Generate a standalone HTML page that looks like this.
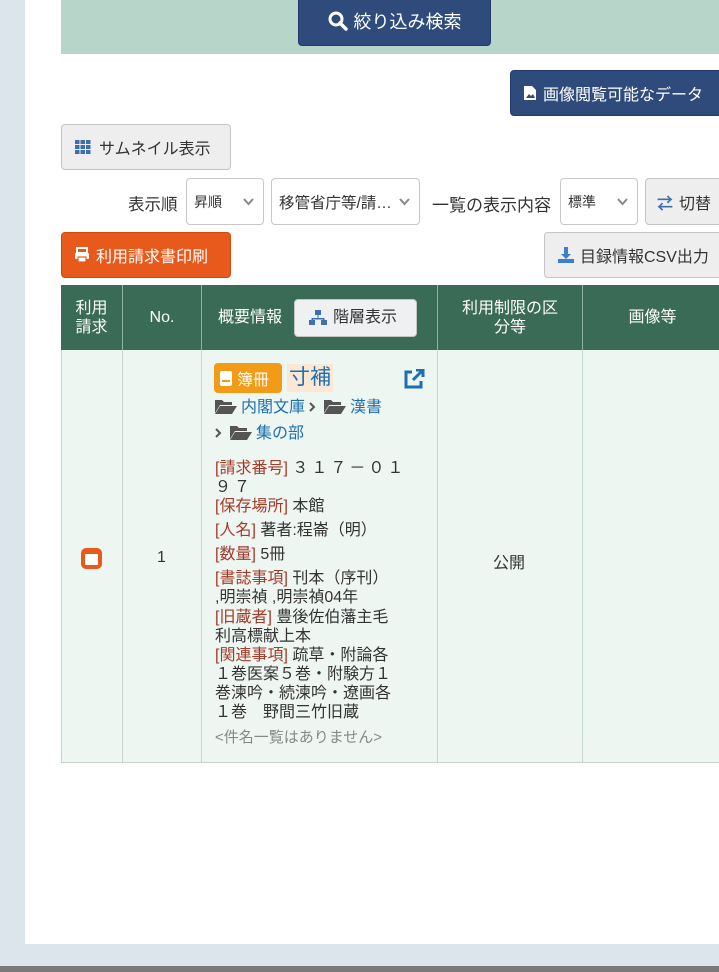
<!DOCTYPE html>
<html><head><meta charset="utf-8"><style>
*{box-sizing:border-box;margin:0;padding:0}
body{width:719px;height:972px;overflow:hidden;background:#dde5ec;position:relative;font-family:"Liberation Sans","Noto Sans CJK JP",sans-serif;color:#333;font-size:16px}
.a{position:absolute;white-space:nowrap}
.panel{left:25px;top:0;width:694px;height:944px;background:#fff}
.btn{position:absolute;border-radius:4px;display:flex;align-items:center;font-size:16px}
.gray{background:#eeeeee;border:1px solid #c4c4c4;color:#333}
.navy{background:#2f4b7c;color:#fff;border:1px solid #23396a}
.sel{position:absolute;border:1px solid #c8c8c8;border-radius:4px;background:#fff;font-size:14px;display:flex;align-items:center;padding-left:7px;color:#333}
.sel svg{position:absolute;right:9px;top:19px}
.th{position:absolute;top:285px;height:65px;background:#3a6b56;color:#fff;display:flex;align-items:center;justify-content:center;text-align:center;font-size:16px;line-height:19px;border-right:1px solid #8fb3a2}
.td{position:absolute;top:350px;height:413px;background:#eef6f2;border-right:1px solid #c6d7cf;border-bottom:1px solid #c6d7cf}
.r{color:#a33b2b}
.l{position:absolute;left:215px;font-size:16px;line-height:19px;white-space:nowrap;color:#333}
.blue{color:#1f6fb0}
.f{display:inline-block;vertical-align:-2px;margin-right:4px}
.ch{display:inline-block;vertical-align:0px;margin:0 8px 0 4px}
</style></head><body>
<div class="a panel"></div>
<div class="a" style="left:0;top:966px;width:719px;height:6px;background:#7a7a7a"></div>
<div class="a" style="left:61px;top:0;width:658px;height:54px;background:#b7d5c8"></div>
<div class="btn navy" style="left:298px;top:-4px;width:193px;height:50px;justify-content:center;font-size:18px">
<svg width="20" height="20" viewBox="0 0 20 20" style="margin-right:6px"><circle cx="8" cy="8" r="6" fill="none" stroke="#fff" stroke-width="3"/><path d="M12 12l6 6" stroke="#fff" stroke-width="3.5" stroke-linecap="round"/></svg>絞り込み検索</div>
<div class="btn navy" style="left:510px;top:70px;width:220px;height:46px;padding-left:12px">
<svg width="14" height="16" viewBox="0 0 14 16" style="margin-right:6px"><path d="M1 1h8l4 4v10H1z" fill="#fff"/><path d="M3 13l3-4 2 2 2-2 2 4z" fill="#2f4b7c"/></svg>画像閲覧可能なデータ</div>
<div class="btn gray" style="left:61px;top:124px;width:170px;height:46px;padding-left:13px">
<svg width="16" height="16" viewBox="0 0 16 16" style="margin-right:8px" fill="#3d6fb0"><rect x="0" y="1" width="4.5" height="4"/><rect x="5.5" y="1" width="4.5" height="4"/><rect x="11" y="1" width="4.5" height="4"/><rect x="0" y="6" width="4.5" height="4"/><rect x="5.5" y="6" width="4.5" height="4"/><rect x="11" y="6" width="4.5" height="4"/><rect x="0" y="11" width="4.5" height="4"/><rect x="5.5" y="11" width="4.5" height="4"/><rect x="11" y="11" width="4.5" height="4"/></svg>サムネイル表示</div>
<div class="a" style="left:128px;top:191px;font-size:16.5px">表示順</div>
<div class="sel" style="left:186px;top:178px;width:78px;height:47px">昇順<svg width="11" height="8" viewBox="0 0 11 8"><path d="M1 1l4.5 5L10 1" fill="none" stroke="#888" stroke-width="2"/></svg></div>
<div class="sel" style="left:271px;top:178px;width:149px;height:47px;font-size:15.5px">移管省庁等/請…<svg width="11" height="8" viewBox="0 0 11 8"><path d="M1 1l4.5 5L10 1" fill="none" stroke="#888" stroke-width="2"/></svg></div>
<div class="a" style="left:432px;top:191px;font-size:17px">一覧の表示内容</div>
<div class="sel" style="left:560px;top:178px;width:78px;height:47px">標準<svg width="11" height="8" viewBox="0 0 11 8"><path d="M1 1l4.5 5L10 1" fill="none" stroke="#888" stroke-width="2"/></svg></div>
<div class="btn gray" style="left:645px;top:178px;width:90px;height:47px;padding-left:11px"><span style="color:#3d6fb0;margin-right:6px;font-weight:bold">&#8644;</span>切替</div>
<div class="btn" style="left:61px;top:232px;width:170px;height:46px;padding-left:12px;background:#e85a1b;color:#fff;border:1px solid #d04a10">
<svg width="16" height="16" viewBox="0 0 16 16" style="margin-right:6px"><rect x="3" y="1" width="10" height="5" fill="none" stroke="#fff" stroke-width="2"/><rect x="1" y="6" width="14" height="6" rx="1" fill="#fff"/><rect x="4" y="10" width="8" height="5" fill="#fff" stroke="#e85a1b" stroke-width="1.2"/></svg>利用請求書印刷</div>
<div class="btn gray" style="left:544px;top:232px;width:190px;height:46px;padding-left:12px">
<svg width="18" height="18" viewBox="0 0 18 18" style="margin-right:5px"><path d="M7 1h4v7h3l-5 5-5-5h3z" fill="#3d7fc8"/><rect x="1" y="13" width="16" height="4" fill="#3d7fc8"/></svg>目録情報CSV出力</div>

<div class="th" style="left:61px;width:62px">利用<br>請求</div>
<div class="th" style="left:123px;width:79px">No.</div>
<div class="th" style="left:202px;width:236px;justify-content:flex-start;padding-left:16px">概要情報
<div class="btn gray" style="position:relative;margin-left:12px;width:123px;height:38px;padding-left:14px;background:#eef0f2">
<svg width="18" height="16" viewBox="0 0 18 16" style="margin-right:6px" fill="#3d6fb0"><rect x="6" y="0" width="6" height="5"/><rect x="0" y="10" width="6" height="5"/><rect x="12" y="10" width="6" height="5"/><path d="M8.5 5v3H2.5v2h1.5V9.5h10V10h1.5V8H9.5V5z"/></svg>階層表示</div></div>
<div class="th" style="left:438px;width:145px">利用制限の区<br>分等</div>
<div class="th" style="left:583px;width:140px">画像等</div>

<div class="td" style="left:61px;width:62px;border-left:1px solid #c6d7cf"></div>
<div class="td" style="left:123px;width:79px"></div>
<div class="td" style="left:202px;width:236px"></div>
<div class="td" style="left:438px;width:145px"></div>
<div class="td" style="left:583px;width:140px"></div>
<div class="a" style="left:81px;top:548px;width:21px;height:21px;border-radius:5px;background:#e85a1b"><div style="position:absolute;left:4px;top:6px;width:13px;height:11px;background:#fff;border-radius:1px"></div></div>
<div class="a" style="left:157px;top:549px">1</div>
<div class="a" style="left:493px;top:549px">公開</div>

<div class="a" style="left:214px;top:363px;width:68px;height:30px;background:#f29b17;border-radius:4px;color:#fff;display:flex;align-items:center;padding-left:6px;font-size:16px"><span style="display:inline-block;width:12px;height:15px;background:#fff;border-radius:2px;margin-right:5px;position:relative"><span style="position:absolute;left:2px;top:9px;width:8px;height:2px;background:#f29b17"></span></span>簿冊</div>
<div class="a blue" style="left:287px;top:364px;background:#fbe8d4;padding:0 2px;font-size:21px;line-height:28px">寸補</div>
<svg class="a" style="left:403px;top:369px" width="22" height="20" viewBox="0 0 22 20"><path d="M9 3H3v15h15v-6" fill="none" stroke="#1f6fb0" stroke-width="3"/><path d="M13 1h7v7M20 1l-10 10" fill="none" stroke="#1f6fb0" stroke-width="3"/></svg>
<div class="l blue" style="top:398px"><svg class="f" width="22" height="15" viewBox="0 0 22 15"><path d="M0 1h7l2 2h8v3H5L0 14z" fill="#555"/><path d="M5 7h17l-5 8H0z" fill="#555"/></svg>内閣文庫<svg class="ch" width="7" height="10" viewBox="0 0 7 10"><path d="M1 1l4 4-4 4" fill="none" stroke="#555" stroke-width="2"/></svg><svg class="f" width="22" height="15" viewBox="0 0 22 15"><path d="M0 1h7l2 2h8v3H5L0 14z" fill="#555"/><path d="M5 7h17l-5 8H0z" fill="#555"/></svg>漢書</div>
<div class="l blue" style="top:424px"><svg class="ch" style="margin-left:0" width="7" height="10" viewBox="0 0 7 10"><path d="M1 1l4 4-4 4" fill="none" stroke="#555" stroke-width="2"/></svg><svg class="f" width="22" height="15" viewBox="0 0 22 15"><path d="M0 1h7l2 2h8v3H5L0 14z" fill="#555"/><path d="M5 7h17l-5 8H0z" fill="#555"/></svg>集の部</div>
<div class="l" style="top:459px"><span class="r">[請求番号]</span> <span style="letter-spacing:3px">３１７－０１</span></div>
<div class="l" style="top:478px;letter-spacing:3px">９７</div>
<div class="l" style="top:497px"><span class="r">[保存場所]</span> 本館</div>
<div class="l" style="top:521px"><span class="r">[人名]</span> 著者:程崙（明）</div>
<div class="l" style="top:545px"><span class="r">[数量]</span> 5冊</div>
<div class="l" style="top:569px"><span class="r">[書誌事項]</span> 刊本（序刊）</div>
<div class="l" style="top:588px">,明崇禎 ,明崇禎04年</div>
<div class="l" style="top:608px"><span class="r">[旧蔵者]</span> 豊後佐伯藩主毛</div>
<div class="l" style="top:627px">利高標献上本</div>
<div class="l" style="top:646px"><span class="r">[関連事項]</span> 疏草・附論各</div>
<div class="l" style="top:665px">１巻医案５巻・附験方１</div>
<div class="l" style="top:684px">巻湅吟・続湅吟・遼画各</div>
<div class="l" style="top:703px">１巻　野間三竹旧蔵</div>
<div class="l" style="top:728px;color:#888;font-size:15px">&lt;件名一覧はありません&gt;</div>
</body></html>
